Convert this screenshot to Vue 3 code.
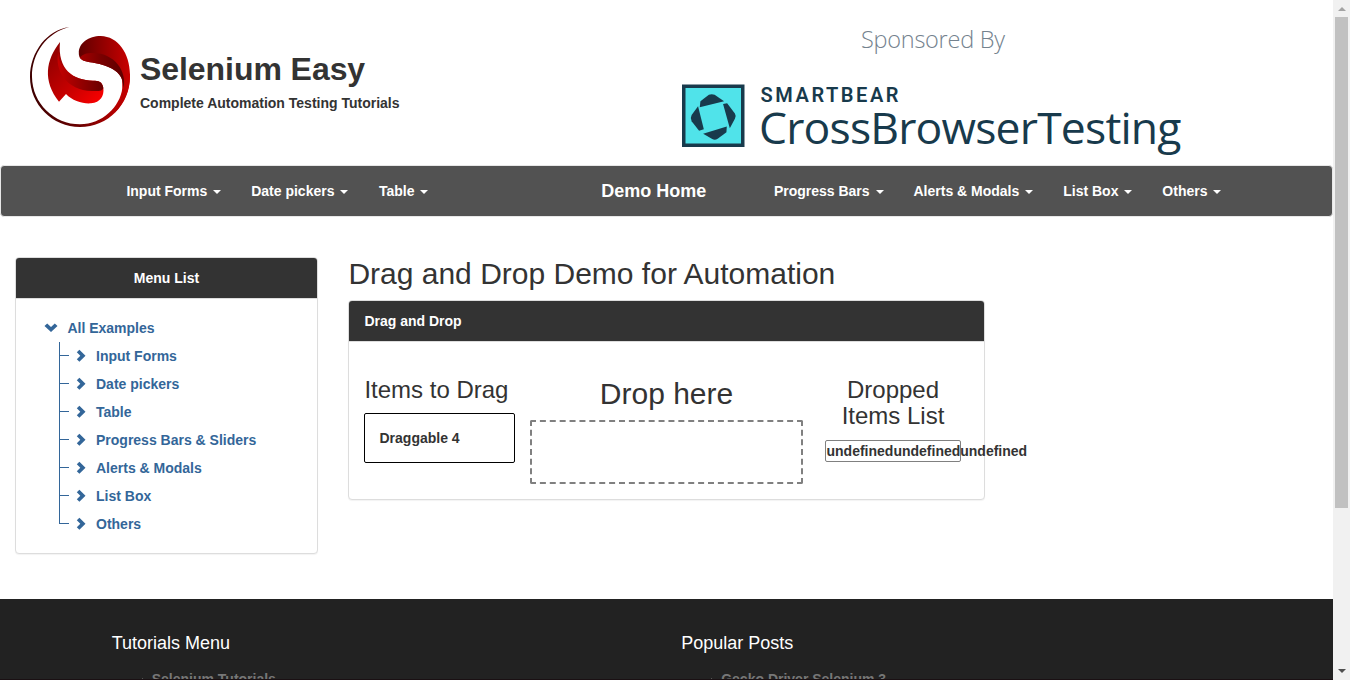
<script setup>
const leftNav = ['Input Forms', 'Date pickers', 'Table']
const rightNav = ['Progress Bars', 'Alerts & Modals', 'List Box', 'Others']
const tree = ['Input Forms', 'Date pickers', 'Table', 'Progress Bars & Sliders', 'Alerts & Modals', 'List Box', 'Others']
const footer = [
  { title: 'Tutorials Menu', link: 'Selenium Tutorials' },
  { title: 'Popular Posts', link: 'Gecko Driver Selenium 3' },
]
</script>

<template>
  <div class="window">
    <div class="page">
      <header class="header">
        <svg class="logo" viewBox="30 21 300 300">
          <defs>
            <linearGradient id="ring" x1="0" y1="0" x2="1" y2="0">
              <stop offset="0" stop-color="#3d0000" />
              <stop offset=".5" stop-color="#6b0000" />
              <stop offset="1" stop-color="#d40000" />
            </linearGradient>
            <linearGradient id="fold" x1="0" y1="0" x2="1" y2="0">
              <stop offset="0" stop-color="#a80000" />
              <stop offset=".5" stop-color="#780000" />
              <stop offset="1" stop-color="#5c0000" />
            </linearGradient>
            <linearGradient id="cap" x1="0" y1="0" x2="1" y2="0">
              <stop offset="0" stop-color="#600000" />
              <stop offset=".5" stop-color="#950000" />
              <stop offset="1" stop-color="#c90000" />
            </linearGradient>
            <linearGradient id="flame" x1="0" y1="0" x2="1" y2="1">
              <stop offset="0" stop-color="#850000" />
              <stop offset=".65" stop-color="#d00000" />
              <stop offset="1" stop-color="#ff0000" />
            </linearGradient>
            <linearGradient id="shade" x1="0" y1="0" x2="1" y2="0">
              <stop offset="0" stop-color="#c40000" />
              <stop offset="1" stop-color="#680000" />
            </linearGradient>
          </defs>
          <path fill="url(#ring)" d="M148 21C82 29 30 96 30 171C30 254 97 321 180 321C264 321 330 253 330 170L308 130L307 205C300 260 248 313 180 313C102 313 37 250 36 171C35 99 82 37 148 21Z" />
          <path fill="url(#cap)" d="M177 106C172 72 203 48 242 48C296 49 331 103 330 169C329 211 314 248 284 278C306 245 312 205 306 179C296 145 246 132 210 127C191 124 180 119 177 106Z" />
          <path fill="url(#fold)" d="M177 106C178 119 191 124 210 127C246 132 296 145 307 181L311 203C321 156 286 99 218 99C200 99 187 103 180 113Z" />
          <path fill="url(#flame)" d="M120 66C77 120 68 183 117 245L138 222C157 242 188 252 213 250C242 248 253 226 250 204C247 184 236 182 219 182C159 180 112 149 120 66Z" />
          <path fill="url(#shade)" d="M115 96C103 151 139 211 216 213C237 214 248 213 250 204C247 184 236 182 219 182C160 180 115 149 115 96Z" />
        </svg>
        <div class="brand">
          <h1>Selenium Easy</h1>
          <p>Complete Automation Testing Tutorials</p>
        </div>
        <svg class="sponsor" viewBox="0 0 530 165">
          <text class="sponsored" x="191" y="48" textLength="144">Sponsored By</text>
          <rect x="13.75" y="86.25" width="59" height="59" fill="#50e3ea" stroke="#183a4c" stroke-width="3.5" />
          <g fill="#183a4c" transform="translate(0 10) scale(.338)">
            <path d="M88 288L90 270L115 251Q123 247 132 251L160 270Z" />
            <path d="M157 278L169 276L192 306Q197 314 192 322L177 350Z" />
            <path d="M168 345L167 362L141 381Q133 386 125 382L98 366Z" />
            <path d="M83 285L100 353L86 357L64 329Q59 320 64 311Z" />
          </g>
          <text class="smartbear" x="90.5" y="102" textLength="138">SMARTBEAR</text>
          <text class="cbt" x="89" y="144" textLength="422.5">CrossBrowserTesting</text>
        </svg>
      </header>

      <nav class="navbar">
        <a v-for="n in leftNav" :key="n">{{ n }} <b class="caret"></b></a>
        <a class="home">Demo Home</a>
        <a v-for="n in rightNav" :key="n">{{ n }} <b class="caret"></b></a>
      </nav>

      <main class="main">
        <aside class="panel side">
          <div class="panel-head">Menu List</div>
          <div class="tree">
            <div class="root">
              <svg class="down" viewBox="0 0 14 10"><path d="M0.5 3L3.2 .6L7 4.1L10.8 .6L13.5 3L7 9Z" /></svg>
              <span>All Examples</span>
            </div>
            <ul>
              <li v-for="t in tree" :key="t">
                <svg class="right" viewBox="0 0 10 14"><path d="M.8 3.3L3.4 .7L9.5 6.7L3.4 12.8L.8 10.2L4.3 6.7Z" /></svg>
                <span>{{ t }}</span>
              </li>
            </ul>
          </div>
        </aside>

        <section class="content">
          <h2>Drag and Drop Demo for Automation</h2>
          <div class="panel">
            <div class="panel-head left">Drag and Drop</div>
            <div class="board">
              <div class="drag">
                <h3>Items to Drag</h3>
                <div class="item">Draggable 4</div>
              </div>
              <div class="drop">
                <h2>Drop here</h2>
                <div class="zone"></div>
              </div>
              <div class="dropped">
                <h3>Dropped Items List</h3>
                <div class="list">undefinedundefinedundefined</div>
              </div>
            </div>
          </div>
        </section>
      </main>

      <footer class="footer">
        <div v-for="f in footer" :key="f.title" class="fcol">
          <h4>{{ f.title }}</h4>
          <div class="flink"><svg viewBox="0 0 5 8"><path d="M0 0L5 4L0 8Z" /></svg><span>{{ f.link }}</span></div>
        </div>
      </footer>
    </div>
    <div class="scrollbar">
      <svg viewBox="0 0 8 4"><path fill="#a3a3a3" d="M0 4L4 0L8 4Z" /></svg>
      <div class="thumb"></div>
      <svg class="end" viewBox="0 0 8 4"><path fill="#505050" d="M0 0H8L4 4Z" /></svg>
    </div>
  </div>
</template>

<style>
body { margin: 0; overflow: hidden; }
</style>

<style scoped>
* { box-sizing: border-box; }
.window {
  display: flex;
  height: 680px;
  overflow: hidden;
  background: #fff;
  color: #333;
  font: bold 14px/20px "Liberation Sans", Arial, sans-serif;
}
h1, h2, h3, h4, p, ul { margin: 0; padding: 0; }
h2, h3, h4 { font-weight: normal; line-height: 1.1; }
h2 { font-size: 30px; }
h3 { font-size: 24px; }
.page { position: relative; width: 1333px; height: 680px; overflow: hidden; flex: none; }
.page::after { content: ""; position: absolute; left: 0; right: 0; bottom: 0; height: 1px; background: #1a1013; }
.header { display: flex; height: 165px; padding-left: 30px; }
.logo { width: 100px; height: 100px; margin-top: 27px; flex: none; }
.brand { width: 540px; padding: 52px 0 0 10px; }
.brand h1 { font-size: 32px; line-height: 35px; letter-spacing: -.06px; }
.brand p { margin-top: 6px; }
.sponsor { width: 530px; height: 165px; flex: none; font-family: "Open Sans", sans-serif; }
.sponsored { font-size: 23.5px; font-weight: 300; fill: #74828e; }
.cbt { font-size: 44.5px; font-weight: 400; fill: #183a4c; }
.smartbear { font-family: Roboto, sans-serif; font-size: 20px; font-weight: 600; fill: #183a4c; }

.navbar {
  display: flex;
  align-items: center;
  height: 52px;
  padding-left: 110.4px;
  border: 1px solid #e7e7e7;
  border-radius: 4px;
  background: #525252;
  color: #fff;
}
.navbar a { padding: 0 15px; white-space: nowrap; }
.navbar a:nth-child(3) { padding-left: 15.6px; }
.navbar .home { font-size: 18px; margin: 0 37.5px 0 143px; }
.caret {
  display: inline-block;
  margin-left: 2px;
  vertical-align: middle;
  border-top: 4px solid #fff;
  border-left: 4px solid transparent;
  border-right: 4px solid transparent;
}

.main { display: flex; gap: 30px; height: 382px; padding: 40px 15px 0; }
.panel { border: 1px solid #ddd; border-radius: 4px; background: #fff; box-shadow: 0 1px 1px rgba(0, 0, 0, .05); }
.panel-head {
  height: 41px;
  padding: 10px 15px;
  border-bottom: 1px solid #ddd;
  border-radius: 3px 3px 0 0;
  background: #333;
  color: #fff;
  text-align: center;
}
.panel-head.left { padding-left: 15.4px; text-align: left; }
.side { width: 303px; height: 297px; }
.tree { padding: 15px 0 0 29px; color: #336699; }
.root { display: flex; align-items: center; height: 28px; }
.down { width: 14px; height: 10px; margin: -1px 9px 0 -.6px; }
.right { width: 10px; height: 14px; margin: 0 10px 0 7px; }
.tree svg { fill: #336699; }
.tree ul { list-style: none; padding-left: 14px; }
.tree li { position: relative; display: flex; align-items: center; height: 28px; padding-left: 10px; }
.tree li::before { content: ""; position: absolute; left: 0; top: 0; width: 1px; height: 28px; background: #336699; }
.tree li:last-child::before { height: 14px; }
.tree li::after { content: ""; position: absolute; left: 0; top: 13px; width: 10px; height: 1px; background: #336699; }

.content { width: 637px; }
.content > h2 { margin-bottom: 10px; padding-left: .4px; }
.content > .panel { height: 200px; }
.board { display: flex; padding: 15px 15px 0; }
.drag { width: 151px; padding-top: 20px; }
.drag h3, .dropped h3 { line-height: 26px; }
.drag h3 { padding-left: .4px; }
.drag .item { height: 50px; margin-top: 10px; padding: 14px 14.5px; border: 1px solid #000; border-radius: 2px; }
.drop { width: 273px; margin-left: 15px; padding-top: 20px; text-align: center; }
.zone { height: 64px; margin-top: 10px; border: 2px dashed gray; border-radius: 2px; }
.dropped { width: 136px; margin-left: 22px; padding-top: 20px; text-align: center; }
.dropped h3 { padding: 0 10px; }
.list { height: 22px; margin-top: 11px; padding-left: .5px; border: 1px solid gray; border-radius: 2px; text-align: left; white-space: nowrap; }

.footer { display: flex; height: 200px; padding: 34px 0 0 111.7px; background: #222; }
.fcol { width: 569.5px; }
.fcol h4 { font-size: 18px; line-height: 20px; color: #fff; }
.flink { display: flex; align-items: center; margin-top: 16px; padding-left: 31px; color: #777; }
.flink svg { width: 5px; height: 8px; margin: 6px 5px 0 -1px; fill: #777; }

.scrollbar { display: flex; flex-direction: column; align-items: center; width: 17px; height: 680px; background: #f1f1f1; }
.scrollbar svg { width: 8px; height: 4px; margin: 7px 0 6px; flex: none; }
.thumb { width: 13px; height: 491px; background: #c1c1c1; }
.scrollbar svg.end { margin: auto 0 7px; }
</style>
